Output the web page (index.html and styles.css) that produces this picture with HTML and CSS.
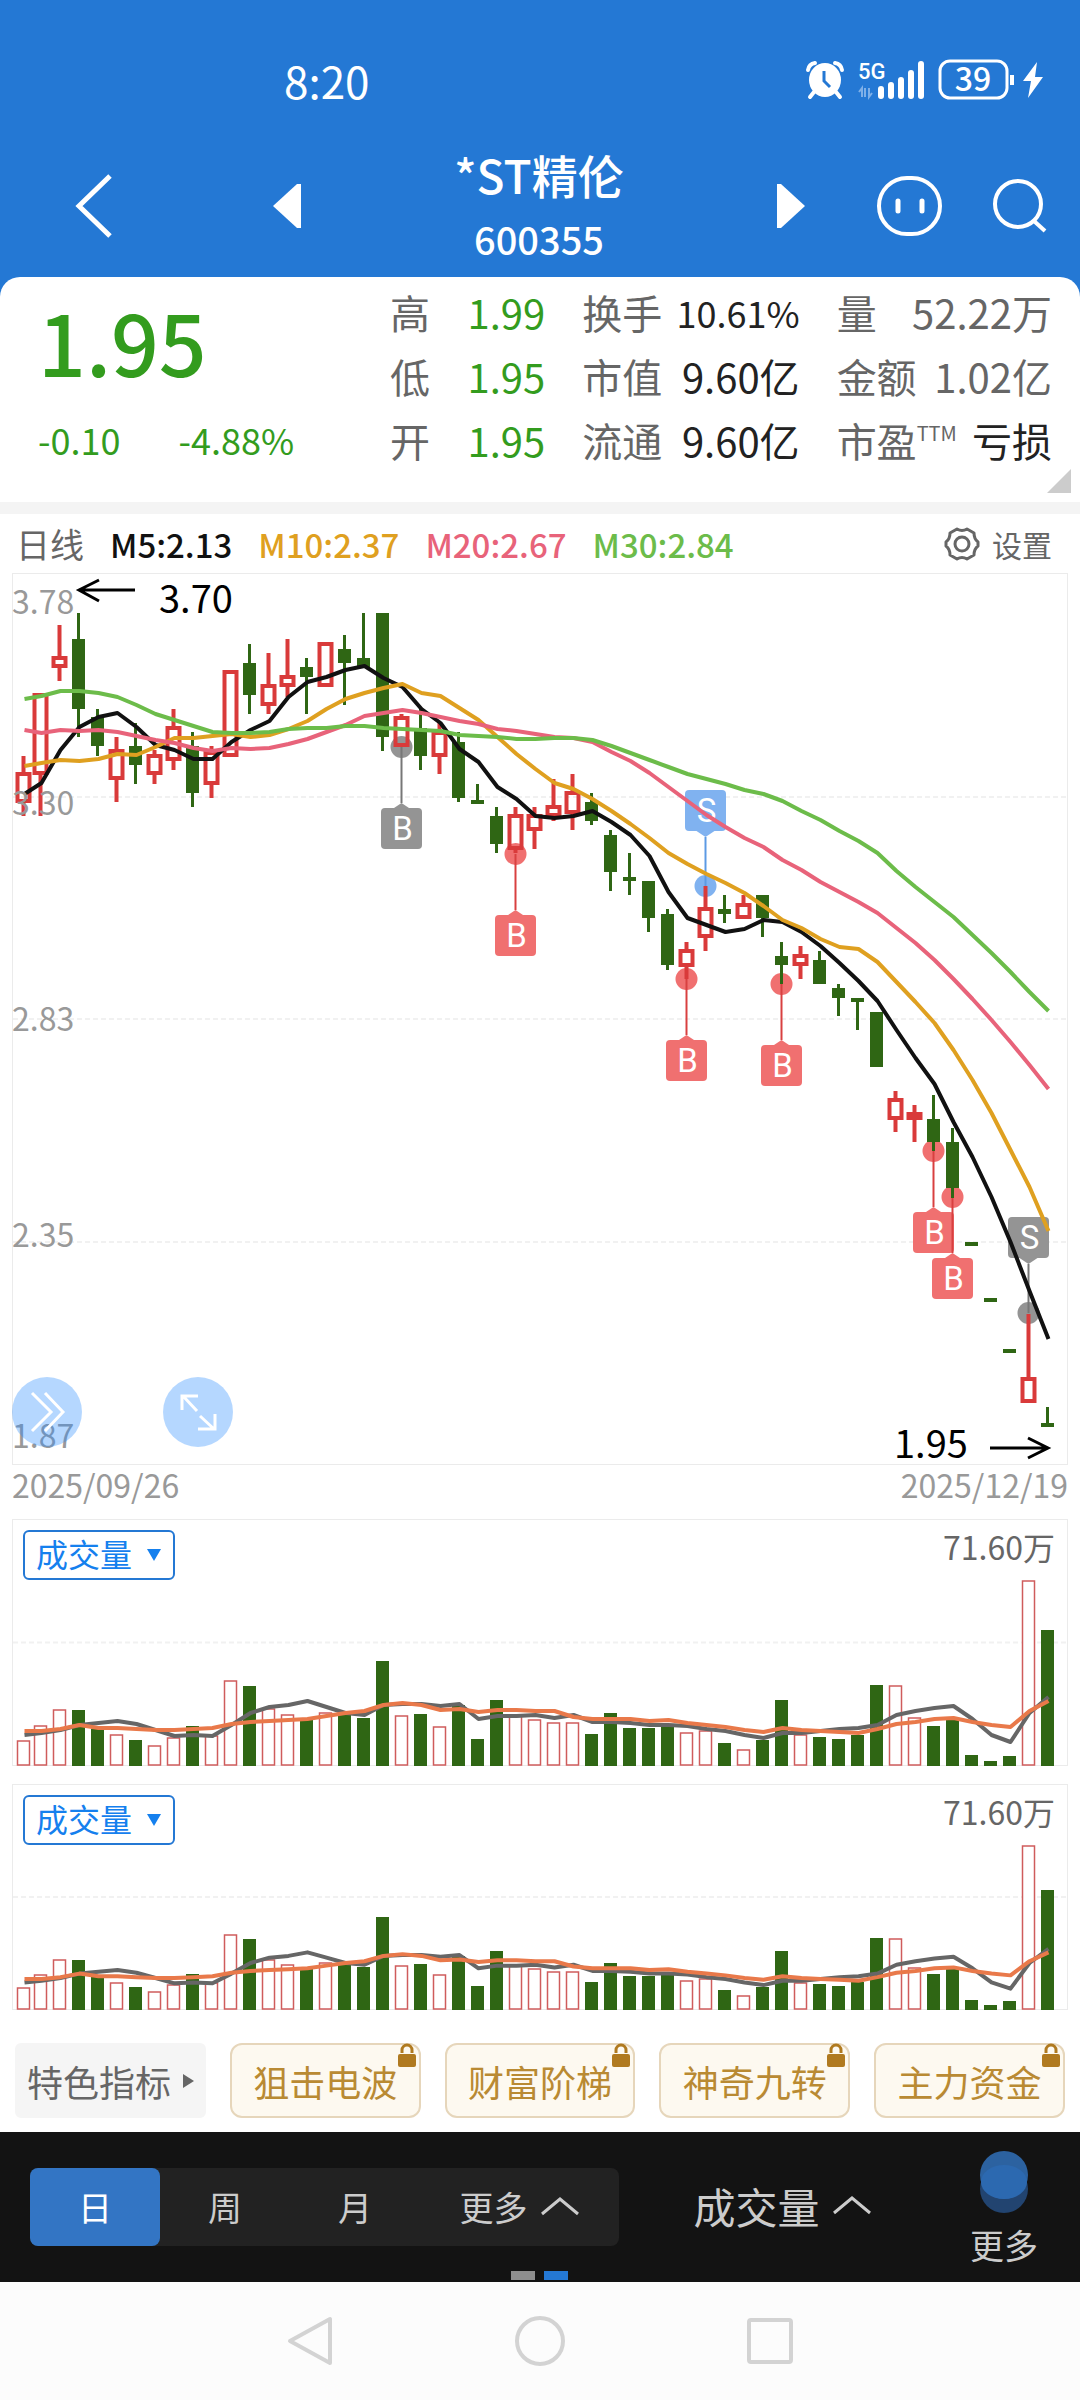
FILE: index.html
```html
<!DOCTYPE html>
<html lang="zh-CN">
<head>
    <meta charset="UTF-8">
    <meta name="viewport" content="width=device-width, initial-scale=1">
    <title>*ST精伦 600355</title>
    <link rel="stylesheet" href="styles.css">
</head>
<body>
    <header class="top">
        <div class="status">
            <span class="clock">8:20</span>
            <svg class="status-icons" width="240" height="40" viewBox="0 0 240 40" aria-hidden="true">
                <!-- alarm -->
                <ellipse cx="20" cy="20" rx="16" ry="17" fill="#fff"/>
                <path d="M19 11v10l6 6" fill="none" stroke="#2478d4" stroke-width="3"/>
                <path d="M3 10q1-6 7-7M37 10q-1-6-7-7M9 32l-4 5M31 32l4 5" fill="none" stroke="#fff" stroke-width="4" stroke-linecap="round"/>
                <!-- signal -->
                <text class="net" x="53" y="19">5G</text>
                <path d="M57 37V28l-3 4M64 28v9l3-4M60 37v-9M67 28" fill="none" stroke="#7fb0e8" stroke-width="2"/>
                <path d="M76 36v-7M86 36V25M96 36V20M106 36V13M116 36V4" fill="none" stroke="#fff" stroke-width="6" stroke-linecap="round"/>
                <!-- battery -->
                <rect x="135" y="1" width="67" height="37" rx="10" fill="none" stroke="#fff" stroke-width="3"/>
                <text class="level" x="168" y="31">39</text>
                <path d="M207 15v10" stroke="#fff" stroke-width="4"/>
                <path d="M232 2l-14 19h8l-3 17 15-21h-8z" fill="#fff"/>
            </svg>
        </div>
        <nav class="title-bar">
            <button class="icon-btn back" aria-label="返回">
                <svg width="40" height="66" viewBox="0 0 40 66"><path d="M34 3L3 33l31 30" fill="none" stroke="#fff" stroke-width="5"/></svg>
            </button>
            <button class="icon-btn" aria-label="上一只">
                <svg width="28" height="44" viewBox="0 0 28 44"><path d="M28 0v44h-4L0 22 24 0z" fill="#fff"/></svg>
            </button>
            <div class="stock">
                <h1>*ST精伦</h1>
                <p>600355</p>
            </div>
            <button class="icon-btn" aria-label="下一只">
                <svg width="28" height="44" viewBox="0 0 28 44"><path d="M0 0v44h4l24-22L4 0z" fill="#fff"/></svg>
            </button>
            <div class="tools">
                <button class="icon-btn" aria-label="智能助手">
                    <svg width="68" height="62" viewBox="0 0 68 62"><rect x="3" y="3" width="61" height="56" rx="28" fill="none" stroke="#fff" stroke-width="4"/><path d="M22 26v10M46 26v10" stroke="#fff" stroke-width="5" stroke-linecap="round"/></svg>
                </button>
                <button class="icon-btn" aria-label="搜索">
                    <svg width="56" height="56" viewBox="0 0 56 56"><circle cx="26" cy="26" r="23" fill="none" stroke="#fff" stroke-width="4"/><path d="M42 43l11 10" stroke="#fff" stroke-width="4"/></svg>
                </button>
            </div>
        </nav>
    </header>

    <section class="quote">
        <div class="price">
            <strong>1.95</strong>
            <div class="change"><span>-0.10</span><span>-4.88%</span></div>
        </div>
        <dl class="stats">
            <div><dt>高</dt><dd class="down">1.99</dd></div>
            <div><dt>换手</dt><dd class="small">10.61%</dd></div>
            <div><dt>量</dt><dd class="muted">52.22万</dd></div>
            <div><dt>低</dt><dd class="down">1.95</dd></div>
            <div><dt>市值</dt><dd>9.60亿</dd></div>
            <div><dt>金额</dt><dd class="muted">1.02亿</dd></div>
            <div><dt>开</dt><dd class="down">1.95</dd></div>
            <div><dt>流通</dt><dd>9.60亿</dd></div>
            <div><dt>市盈<sup>TTM</sup></dt><dd>亏损</dd></div>
        </dl>
        <span class="corner"></span>
    </section>

    <div class="legend">
        <span class="period">日线</span>
        <span class="m5">M5:2.13</span>
        <span class="m10">M10:2.37</span>
        <span class="m20">M20:2.67</span>
        <span class="m30">M30:2.84</span>
        <button class="setting">
            <svg width="36" height="36" viewBox="0 0 36 36" fill="none" stroke="#666" stroke-width="3" stroke-linejoin="round"><path d="M13 3q5 3 10 0l7 4q0 6 4 9v4q-4 3-4 9l-7 4q-5-3-10 0l-7-4q0-6-4-9v-4q4-3 4-9z"/><circle cx="18" cy="18" r="7"/></svg>
            设置
        </button>
    </div>

    <main class="charts">
        <div class="kline">
            <svg id="kline" viewBox="0 0 1056 892" role="img" aria-label="日K线"></svg>
            <div class="float-btns">
                <button aria-label="展开">
                    <svg width="36" height="42" viewBox="0 0 36 42" fill="none" stroke="#fff" stroke-width="3"><path d="M3 2l19 19L3 40M16 2l18 19-18 19"/></svg>
                </button>
                <button aria-label="全屏">
                    <svg width="36" height="38" viewBox="0 0 36 38" fill="none" stroke="#fff" stroke-width="3"><path d="M2 17V3h16M3 3l14 15M20 23l14 13M35 21v15H18"/></svg>
                </button>
            </div>
        </div>
        <div class="dates"><span>2025/09/26</span><span>2025/12/19</span></div>

        <div class="volume">
            <svg id="vol1" viewBox="0 0 1056 247" role="img" aria-label="成交量"></svg>
            <div class="picker">
                <select aria-label="副图指标一"><option>成交量</option></select>
            </div>
            <span class="vol-max">71.60万</span>
        </div>
        <div class="volume">
            <svg id="vol2" viewBox="0 0 1056 226" role="img" aria-label="成交量"></svg>
            <div class="picker">
                <select aria-label="副图指标二"><option>成交量</option></select>
            </div>
            <span class="vol-max">71.60万</span>
        </div>
    </main>

    <div class="chips">
        <button class="chip plain">特色指标<i class="caret"></i></button>
        <button class="chip">狙击电波<svg class="lock" width="18" height="24" viewBox="0 0 18 24"><rect y="11" width="18" height="13" rx="2" fill="#b07a20"/><path d="M4 10V7a5 5 0 0 1 10 0v3" fill="none" stroke="#b07a20" stroke-width="3"/></svg></button>
        <button class="chip">财富阶梯<svg class="lock" width="18" height="24" viewBox="0 0 18 24"><rect y="11" width="18" height="13" rx="2" fill="#b07a20"/><path d="M4 10V7a5 5 0 0 1 10 0v3" fill="none" stroke="#b07a20" stroke-width="3"/></svg></button>
        <button class="chip">神奇九转<svg class="lock" width="18" height="24" viewBox="0 0 18 24"><rect y="11" width="18" height="13" rx="2" fill="#b07a20"/><path d="M4 10V7a5 5 0 0 1 10 0v3" fill="none" stroke="#b07a20" stroke-width="3"/></svg></button>
        <button class="chip">主力资金<svg class="lock" width="18" height="24" viewBox="0 0 18 24"><rect y="11" width="18" height="13" rx="2" fill="#b07a20"/><path d="M4 10V7a5 5 0 0 1 10 0v3" fill="none" stroke="#b07a20" stroke-width="3"/></svg></button>
    </div>

    <nav class="tabbar">
        <div class="periods">
            <button class="active">日</button>
            <button>周</button>
            <button>月</button>
            <button class="wide">更多<svg width="40" height="20" viewBox="0 0 40 20"><path d="M2 18L20 3l18 15" fill="none" stroke="#ccc" stroke-width="3"/></svg></button>
        </div>
        <button class="indicator">成交量<svg width="40" height="20" viewBox="0 0 40 20"><path d="M2 18L20 3l18 15" fill="none" stroke="#ccc" stroke-width="3"/></svg></button>
        <button class="more">
            <svg width="48" height="62" viewBox="0 0 48 62"><circle cx="24" cy="38" r="24" fill="#224470"/><circle cx="24" cy="24" r="24" fill="#2c62a0"/><ellipse cx="24" cy="31" rx="23" ry="17" fill="#2c69b0"/></svg>
            更多
        </button>
        <div class="pager"><i></i><i class="on"></i></div>
    </nav>

    <nav class="sys-nav">
        <button class="icon-btn" aria-label="后退"><svg width="50" height="50" viewBox="0 0 50 50"><path d="M45 3v44L5 25z" fill="none" stroke="#d3d3d3" stroke-width="4" stroke-linejoin="round"/></svg></button>
        <button class="icon-btn" aria-label="主页"><svg width="50" height="50" viewBox="0 0 50 50"><circle cx="25" cy="25" r="23" fill="none" stroke="#d3d3d3" stroke-width="4"/></svg></button>
        <button class="icon-btn" aria-label="任务"><svg width="50" height="50" viewBox="0 0 50 50"><rect x="4" y="4" width="42" height="42" rx="2" fill="none" stroke="#d3d3d3" stroke-width="4"/></svg></button>
    </nav>

    <script src="chart.js"></script>
</body>
</html>
```

FILE: styles.css
```css
* {
    margin: 0;
    padding: 0;
    box-sizing: border-box;
}

body {
    background: #fff;
    color: #222;
    font-family: "Noto Sans CJK SC", sans-serif;
    font-size: 34px;
}

button, select {
    border: 0;
    background: none;
    color: inherit;
    font: inherit;
    cursor: pointer;
}

svg {
    display: block;
    overflow: visible;
}

.icon-btn {
    display: flex;
}

/* Header */
.top {
    background: #2478d4;
    color: #fff;
    padding: 52px 32px 20px 76px;
}

.status {
    display: flex;
    justify-content: space-between;
    align-items: center;
    height: 56px;
    padding: 0 3px 0 208px;
}

.clock {
    font-size: 44px;
    line-height: 54px;
}

.net {
    fill: #fff;
    font-family: Roboto, sans-serif;
    font-size: 22px;
    font-weight: 500;
}

.level {
    fill: #fff;
    font-size: 32px;
    font-weight: 500;
    text-anchor: middle;
}

.title-bar {
    display: flex;
    align-items: center;
    height: 145px;
    margin-top: 24px;
    padding-top: 3px;
}

.stock {
    flex: 1;
    text-align: center;
}

.stock h1 {
    font-size: 46px;
    line-height: 66px;
    font-weight: 500;
}

.stock p {
    font-size: 38px;
    line-height: 64px;
    font-weight: 500;
}

.back {
    margin-right: 157px;
}

.tools {
    display: flex;
    align-items: center;
    gap: 48px;
    margin-left: 71px;
}

/* Quote */
.quote {
    position: relative;
    display: flex;
    margin-top: -20px;
    padding: 4px 28px 29px 38px;
    background: #fff;
    border-radius: 20px 20px 0 0;
}

.price {
    flex: 0 0 352px;
    color: #339c1e;
}

.price strong {
    display: block;
    font-size: 84px;
    line-height: 120px;
    height: 128px;
    font-weight: 500;
}

.change {
    display: flex;
    gap: 58px;
    font-size: 36px;
    line-height: 60px;
}

.stats {
    flex: 1;
    display: grid;
    grid-template-columns: 155fr 217fr 215fr;
    column-gap: 37px;
}

.stats div {
    display: flex;
    justify-content: space-between;
    height: 64px;
    font-size: 40px;
    line-height: 62px;
    white-space: nowrap;
}

.stats dt, .stats .muted {
    color: #666;
}

.stats .down {
    color: #339c1e;
}

.stats .small {
    font-size: 36px;
}

.stats sup {
    font-size: 20px;
    line-height: 20px;
    vertical-align: 16px;
}

.corner {
    position: absolute;
    right: 9px;
    bottom: 9px;
    width: 24px;
    height: 24px;
    background: #ccc;
    clip-path: polygon(100% 0, 100% 100%, 0 100%);
}

/* MA legend */
.legend {
    display: flex;
    align-items: center;
    gap: 26px;
    height: 71px;
    padding: 0 28px 0 16px;
    border-top: 12px solid #f4f4f4;
    font-size: 33px;
    font-weight: 500;
}

.period {
    color: #666;
    font-size: 34px;
    font-weight: 400;
}

.m5 { color: #111; }
.m10 { color: #dfa020; }
.m20 { color: #e8637a; }
.m30 { color: #6cbc4a; }

.setting {
    display: flex;
    align-items: center;
    gap: 12px;
    margin-left: auto;
    color: #666;
    font-size: 30px;
    font-weight: 400;
}

/* Charts */
.charts {
    padding: 0 12px;
}

.kline, .volume {
    position: relative;
}

.charts > div > svg {
    width: 100%;
    height: auto;
}

.frame {
    fill: none;
    stroke: #ebebeb;
    stroke-width: 1;
}

.grid-line {
    stroke: #f1f1f1;
    stroke-width: 2;
    stroke-dasharray: 5 3;
}

.axis {
    fill: #999;
    font-size: 32px;
}

.extreme {
    fill: #000;
    font-size: 38px;
}

.arrow {
    fill: none;
    stroke: #000;
    stroke-width: 3;
}

.tag {
    fill: #fff;
    font-family: Roboto, sans-serif;
    font-size: 33px;
    text-anchor: middle;
}

.ma {
    fill: none;
    stroke-width: 4;
    stroke-linejoin: round;
}

.float-btns {
    position: absolute;
    left: 0;
    bottom: 18px;
    display: flex;
    gap: 81px;
}

.float-btns button {
    display: flex;
    align-items: center;
    justify-content: center;
    width: 70px;
    height: 70px;
    border-radius: 50%;
    background: rgba(37, 137, 255, 0.34);
}

.dates {
    display: flex;
    justify-content: space-between;
    height: 54px;
    color: #999;
    font-size: 32px;
    line-height: 38px;
}

.volume + .volume {
    margin-top: 18px;
}

.picker {
    position: absolute;
    top: 11px;
    left: 11px;
    width: 152px;
    height: 50px;
    border: 2px solid #2478d4;
    border-radius: 6px;
}

.picker select {
    appearance: none;
    display: block;
    width: 100%;
    height: 42px;
    padding-left: 11px;
    color: #1580ee;
    font-size: 32px;
    line-height: 42px;
}

.picker::after {
    content: "";
    position: absolute;
    top: 17px;
    right: 12px;
    border: 7px solid transparent;
    border-top: 12px solid #1580ee;
    border-bottom: 0;
    pointer-events: none;
}

.vol-max {
    position: absolute;
    top: 4px;
    right: 13px;
    color: #666;
    font-size: 32px;
    line-height: 46px;
}

/* Feature chips */
.chips {
    display: grid;
    grid-template-columns: repeat(5, 1fr);
    gap: 24px;
    padding: 33px 15px 14px;
}

.chip {
    position: relative;
    height: 75px;
    border: 2px solid #e6d6bb;
    border-radius: 12px;
    background: #fdf9f0;
    color: #b98a33;
    font-size: 36px;
    line-height: 68px;
    white-space: nowrap;
}

.plain {
    display: flex;
    align-items: center;
    justify-content: center;
    gap: 12px;
    border-color: #f5f5f5;
    border-radius: 6px;
    background: #f5f5f5;
    color: #666;
}

.caret {
    border: 7px solid transparent;
    border-left: 11px solid #666;
    border-right: 0;
}

.lock {
    position: absolute;
    top: -2px;
    right: 3px;
}

/* Bottom bar */
.tabbar {
    position: relative;
    display: flex;
    align-items: center;
    justify-content: space-between;
    height: 150px;
    padding: 0 42px 0 30px;
    background: #131313;
    color: #ccc;
}

.periods {
    display: flex;
    border-radius: 8px;
    background: #222;
}

.periods button {
    width: 130px;
    height: 78px;
    padding-bottom: 2px;
    border-radius: 8px;
}

.periods .active {
    background: #3375c4;
    color: #fff;
}

.periods .wide {
    width: 199px;
}

.wide, .indicator {
    display: flex;
    align-items: center;
    justify-content: center;
    gap: 12px;
}

.indicator {
    margin-right: 24px;
    padding-bottom: 4px;
    font-size: 42px;
}

.more {
    display: flex;
    flex-direction: column;
    align-items: center;
    gap: 10px;
    padding-top: 4px;
    line-height: 44px;
}

.pager {
    position: absolute;
    bottom: 2px;
    left: 50%;
    display: flex;
    gap: 9px;
    margin-left: -29px;
}

.pager i {
    width: 24px;
    height: 9px;
    background: #8e8e8e;
}

.pager .on {
    background: #2478d4;
}

.sys-nav {
    display: flex;
    justify-content: center;
    gap: 180px;
    height: 118px;
    padding-top: 34px;
    background: #fcfcfc;
}
```

FILE: chart.js
```js
// [up/down, high, body top, body bottom, low]
const candles = [
    ["u",183,199,230,243], ["u",120,120,202,243], ["u",52,83,95,108], ["d",40,66,136,164], ["d",136,144,173,183],
    ["u",164,176,207,229], ["d",150,173,192,211], ["u",177,181,202,211], ["u",136,153,188,197], ["d",159,173,220,234],
    ["u",173,178,212,225], ["u",97,97,184,184], ["d",71,90,122,141], ["u",80,111,133,141], ["u",66,102,114,124],
    ["d",85,94,104,141], ["u",69,69,114,114], ["d",62,76,90,132], ["d",40,85,94,94], ["d",40,40,164,178],
    ["u",141,143,174,174], ["d",136,155,183,197], ["u",150,158,184,201], ["d",159,169,225,229], ["d",211,227,231,231],
    ["d",234,243,271,280], ["u",234,241,277,280], ["u",234,241,258,276], ["u",206,232,244,248], ["u",201,218,241,257],
    ["d",220,229,248,252], ["d",257,262,299,318], ["d",280,304,308,322], ["d",308,308,345,359], ["d",336,341,392,397],
    ["u",369,376,394,406], ["u",313,334,365,378], ["d",322,336,341,350], ["u",322,330,346,346], ["d",322,322,345,364],
    ["d",369,383,392,411], ["u",373,381,393,406], ["d",378,387,411,411], ["d",411,415,425,443], ["d",425,425,429,457],
    ["d",439,439,494,494], ["u",518,525,547,559], ["u",532,539,547,569], ["d",522,546,569,578], ["d",555,569,615,625],
    ["d",669,669,673,673], ["d",725,725,729,729], ["d",776,776,780,780], ["u",741,804,830,830], ["d",834,850,854,854]
];

const ma = {
    "#111": [221,210,177,154,144,140,154,172,177,186,186,169,157,148,124,109,104,97,93,105,114,136,150,176,189,214,226,243,245,243,238,249,262,283,319,345,352,359,356,347,349,359,373,390,408,428,457,485,511,549,584,624,669,718,766],
    "#dfa020": [193,190,187,188,186,181,182,174,165,165,163,161,164,162,156,148,136,126,120,115,111,120,123,135,147,164,181,196,210,216,226,238,251,265,280,291,301,310,320,333,347,355,366,374,376,389,409,429,450,477,507,540,577,614,658],
    "#e8637a": [157,160,157,158,157,159,163,167,170,175,178,175,176,175,171,166,159,152,143,140,137,140,144,148,151,156,158,161,164,165,169,179,188,200,214,228,242,254,265,274,287,297,309,319,329,340,355,370,387,406,426,447,469,492,516],
    "#6cbc4a": [126,123,118,118,120,124,132,141,147,153,159,160,160,159,156,155,155,153,153,155,156,157,158,162,163,164,166,166,165,165,167,173,180,187,194,201,206,211,217,221,228,238,247,258,268,280,298,314,329,344,362,380,399,419,438]
};

// trade marks: [index, letter, dot y, box colour, line colour]
const marks = [
    [20,"B",174,"#949494","#777"], [26,"B",281,"#f07070","#d84040"], [35,"B",406,"#f07070","#d84040"],
    [40,"B",411,"#f07070","#d84040"], [48,"B",578,"#f07070","#d84040"], [49,"B",624,"#f07070","#d84040"],
    [36,"S",313,"#80b2f0","#5c9ae4"], [53,"S",740,"#949494","#777"]
];

const volumes = [25,40,56,55,36,31,25,20,28,39,30,85,79,57,51,46,53,52,47,104,50,51,39,60,26,65,51,46,43,43,31,52,37,37,39,33,35,22,16,25,65,31,28,26,30,80,80,48,39,46,10,4,9,185,135];
const volMa = {
    "#666": [30,32,35,40,42,44,41,35,29,30,29,40,52,58,60,64,58,52,50,60,61,61,59,61,46,49,49,50,47,50,43,43,42,40,40,39,36,34,30,27,32,32,34,36,37,40,50,54,57,59,46,30,23,52,68],
    "#e9794a": [34,34,36,40,37,37,36,35,35,36,37,41,43,44,45,46,49,52,54,60,62,60,55,56,53,55,55,54,54,48,46,46,46,44,45,42,40,38,35,33,37,35,34,33,32,36,41,43,46,47,43,40,38,54,64]
};

const RED = "#d93a3a";
const GREEN = "#2f6614";

function xAt(i) {
    return Math.max(11.5, 9.5 + 19 * i);
}

function rect(x, y, w, h, attrs) {
    return `<rect x="${x}" y="${y}" width="${w}" height="${h}" ${attrs}/>`;
}

function line(values, color, toY) {
    const pts = values.map((v, i) => (xAt(i) + 1) + "," + toY(v)).join(" ");
    return `<polyline class="ma" points="${pts}" stroke="${color}"/>`;
}

function gridLine(y) {
    return `<path class="grid-line" d="M1 ${y}H1055"/>`;
}

function drawKline() {
    let out = rect(0.5, 0.5, 1055, 891, 'class="frame"');
    [224, 446, 669].forEach(y => out += gridLine(y));

    marks.forEach(([i, letter, y, fill, stroke]) => {
        const x = xAt(i);
        const up = letter === "S";
        const box = up ? y - 96 : y + 61;
        const tip = up ? y - 49 : y + 56;
        const base = up ? y - 55 : y + 62;
        out += `<circle cx="${x}" cy="${y}" r="11" fill="${fill}"/>`;
        out += rect(x - 20.5, box, 41, 41, `rx="4" fill="${fill}"`);
        out += `<path d="M${x} ${tip}L${x + 9} ${base}H${x - 9}z" fill="${fill}"/>`;
        out += `<path d="M${x} ${y}V${tip}" stroke="${stroke}" stroke-width="2"/>`;
        out += `<text class="tag" x="${x + 1}" y="${box + 32}">${letter}</text>`;
    });

    candles.forEach(([dir, high, top, bottom, low], i) => {
        const x = xAt(i);
        if (dir === "u") {
            out += rect(x - 2, high, 4, top - high, `fill="${RED}"`);
            out += rect(x - 2, bottom, 4, low - bottom, `fill="${RED}"`);
            out += rect(x - 6, top + 2, 12, bottom - top - 4, `fill="none" stroke="${RED}" stroke-width="4"`);
        } else {
            out += rect(x - 1.5, high, 3, low - high, `fill="${GREEN}"`);
            out += rect(x - 6.5, top, 13, bottom - top, `fill="${GREEN}"`);
        }
    });

    for (const color in ma) out += line(ma[color], color, v => v);

    [["3.78", 41], ["3.30", 242], ["2.83", 458], ["2.35", 674], ["1.87", 875]].forEach(([t, y]) => {
        out += `<text class="axis" x="0" y="${y}">${t}</text>`;
    });

    out += '<path class="arrow" d="M123 17H67M87 7L67 17l20 11"/><text class="extreme" x="147" y="40">3.70</text>';
    out += '<path class="arrow" d="M978 875h57M1016 865l20 10-20 10"/><text class="extreme" x="882" y="885">1.95</text>';
    document.getElementById("kline").innerHTML = out;
}

function drawVolume(id, height, scale) {
    const bottom = height - 1;
    let out = rect(0.5, 0.5, 1055, height - 1, 'class="frame"') + gridLine(height / 2);
    volumes.forEach((v, i) => {
        const x = xAt(i);
        const h = Math.round(v * scale);
        if (candles[i][0] === "u") {
            out += rect(x - 6, bottom - h + 1, 12, h - 1, 'fill="#fff" stroke="#cf5c5c" stroke-width="1.5"');
        } else {
            out += rect(x - 6.5, bottom - h, 13, h + 1, `fill="${GREEN}"`);
        }
    });
    for (const color in volMa) out += line(volMa[color], color, v => bottom - v * scale);
    document.getElementById(id).innerHTML = out;
}

drawKline();
drawVolume("vol1", 247, 1);
drawVolume("vol2", 226, 0.885);
```
